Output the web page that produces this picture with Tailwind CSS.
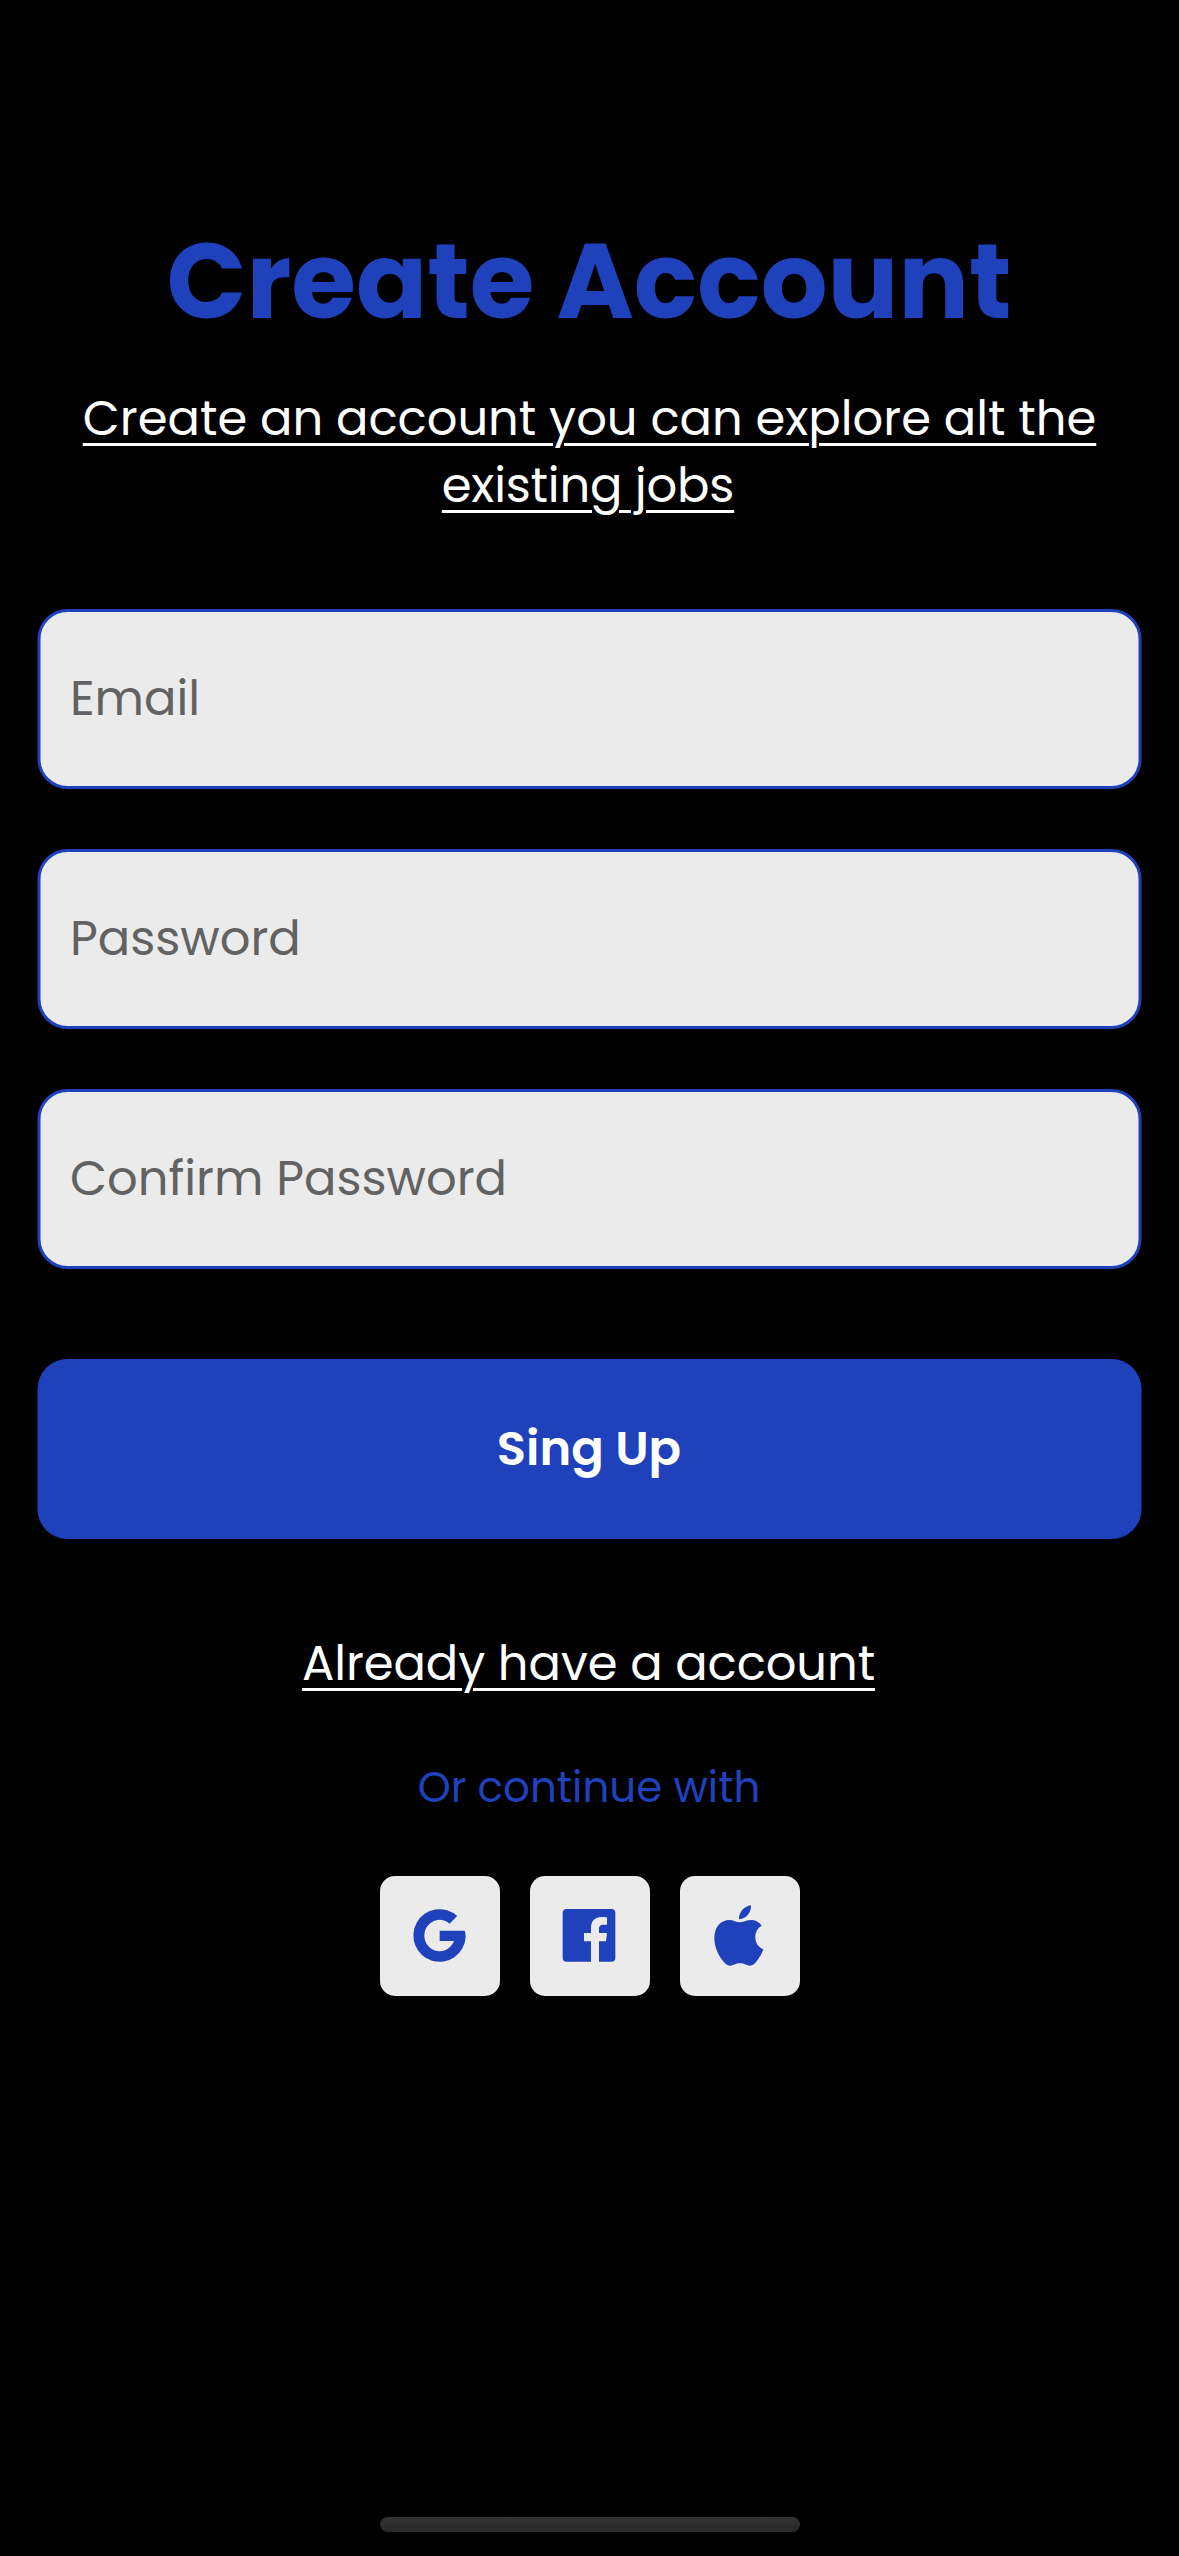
<!DOCTYPE html>
<html lang="en">
<head>
<meta charset="utf-8">
<title>Create Account</title>
<script src="https://cdn.jsdelivr.net/npm/@tailwindcss/browser@4"></script>
</head>
<body class="flex h-[2556px] w-[1179px] flex-col items-center overflow-hidden bg-black pt-[208px] font-[Poppins,Inter,sans-serif] text-[48px] leading-[67px] text-white">
<h1 class="pr-px text-[105px] font-bold leading-[147px] tracking-[-0.08px] text-[#1f41bb]">Create Account</h1>
<p class="mt-[30px] text-center underline decoration-[3px] underline-offset-[8px]">Create an account you can explore alt the<br><span class="mr-[3px] tracking-[-0.2px]">existing jobs</span></p>
<form class="mt-[90px] flex w-[1104px] -translate-x-[0.5px] flex-col gap-[60px]">
<div class="flex h-[180px] items-center rounded-[30px] border-[3px] border-[#1f41bb] bg-[#ebebeb] px-[30px] pb-[2px] text-[#626262]">Email</div>
<div class="flex h-[180px] items-center rounded-[30px] border-[3px] border-[#1f41bb] bg-[#ebebeb] px-[30px] pb-[2px] text-[#626262]">Password</div>
<div class="flex h-[180px] items-center rounded-[30px] border-[3px] border-[#1f41bb] bg-[#ebebeb] px-[30px] pb-[2px] text-[#626262]">Confirm Password</div>
<button type="button" class="mt-[30px] h-[180px] rounded-[30px] bg-[#1f41bb] pb-[2px] text-center font-semibold">Sing Up</button>
</form>
<p class="mt-[91px] mr-[2px] tracking-[-0.08px] underline decoration-[3px] underline-offset-[8px]">Already have a account</p>
<p class="mt-[61px] mr-px text-[42px] leading-[59px] text-[#1f41bb]">Or continue with</p>
<div class="mt-[59px] flex gap-[30px] text-[#1f41bb]">
<div class="size-[120px] rounded-[15px] bg-[#ebebeb]"><svg viewBox="0 0 360 360" class="size-full" fill="currentColor"><path d="M231.5 120A78.5 79 0 1 0 257 184Q257 172 254 164H179V195H222A46 47 0 1 1 209 143Z"/></svg></div>
<div class="size-[120px] rounded-[15px] bg-[#ebebeb]"><svg viewBox="0 0 360 360" class="size-full" fill="currentColor"><path d="M110 99H244Q256 99 256 111V245Q256 257 244 257H207V196H228L231 171H207V160C207 151 210 146 220 146H231V124Q225 123 215 123C194 123 183 136 183 156V171H162V196H183V257H110Q98 257 98 245V111Q98 99 110 99Z"/></svg></div>
<div class="size-[120px] rounded-[15px] bg-[#ebebeb]"><svg viewBox="0 0 360 360" class="size-full" fill="currentColor"><path d="M213 88C214 109 199 129 177 130C175 110 192 91 213 88Z"/><path d="M148 132C160 132 169 139 179 139C189 139 199 132 214 132C226 132 238 138 245 149C232 156 226 169 226 184C226 201 235 214 250 220C246 232 239 244 230 256C224 264 218 269 210 269C199 269 194 262 180 262C166 262 161 269 150 269C141 269 135 263 129 255C113 236 103 210 103 187C103 150 125 132 148 132Z"/></svg></div>
</div>
<div class="mt-auto mb-[24px] h-[15px] w-[420px] shrink-0 rounded-full bg-linear-to-b from-[#333] to-[#282828]"></div>
</body>
</html>
